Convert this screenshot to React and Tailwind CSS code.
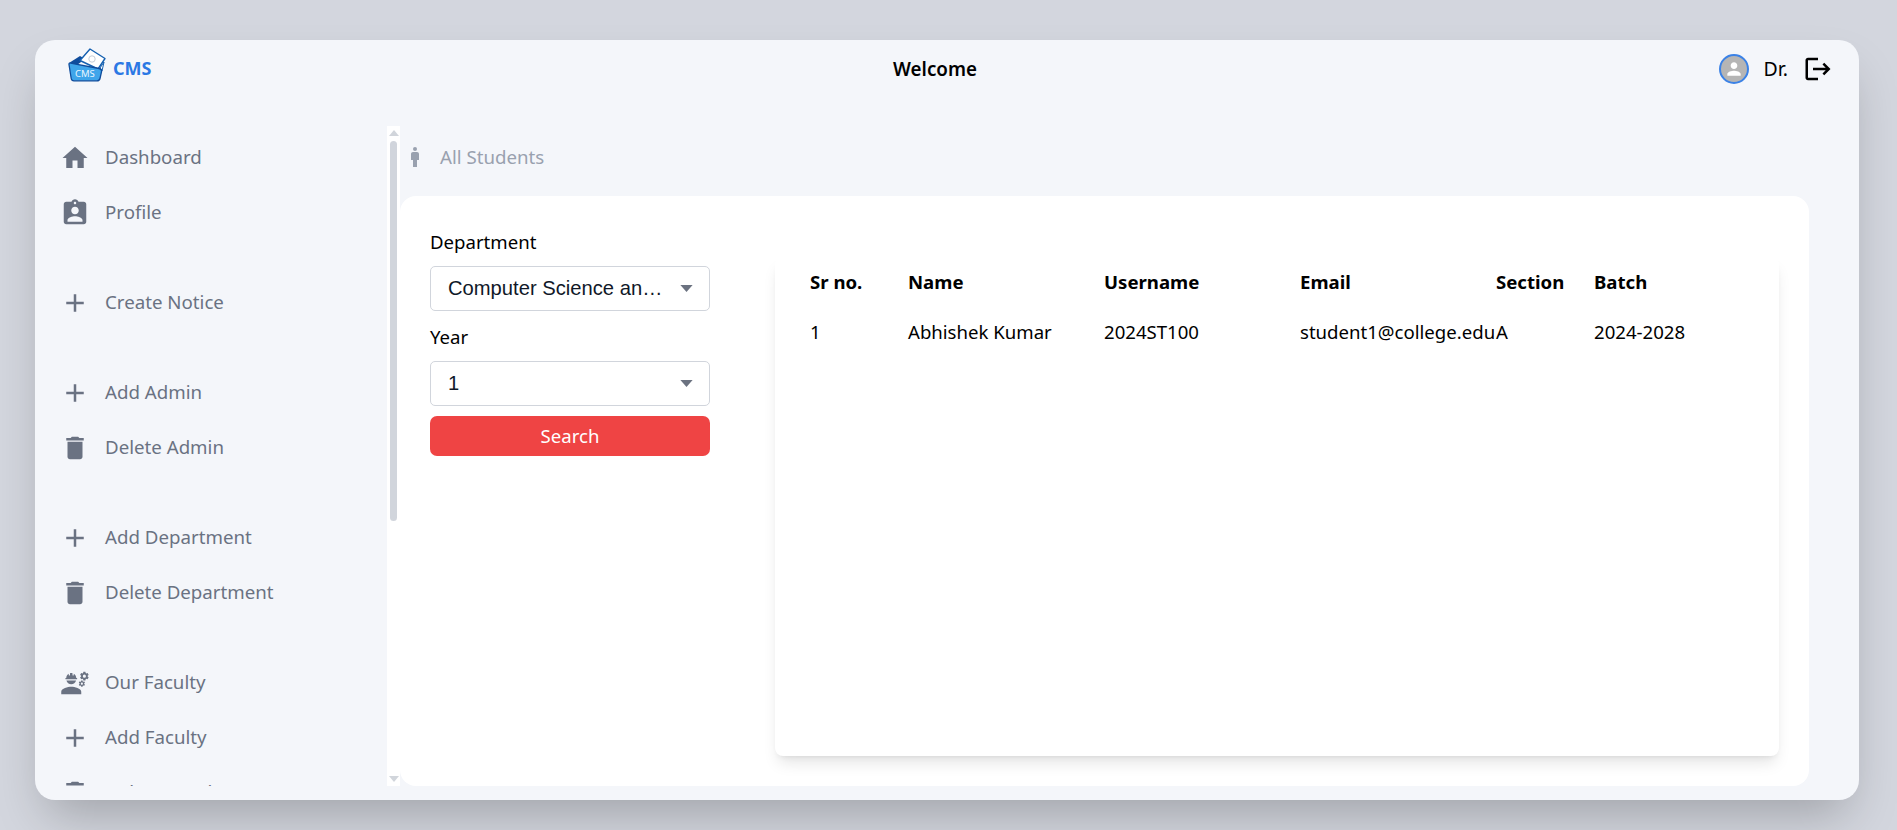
import React from 'react';
import { MdHome, MdAssignmentInd, MdAdd, MdDelete, MdEngineering, MdMan, MdLogout, MdPerson } from 'react-icons/md';

const groups = [
  [
    { icon: MdHome, label: 'Dashboard' },
    { icon: MdAssignmentInd, label: 'Profile' },
  ],
  [{ icon: MdAdd, label: 'Create Notice' }],
  [
    { icon: MdAdd, label: 'Add Admin' },
    { icon: MdDelete, label: 'Delete Admin' },
  ],
  [
    { icon: MdAdd, label: 'Add Department' },
    { icon: MdDelete, label: 'Delete Department' },
  ],
  [
    { icon: MdEngineering, label: 'Our Faculty' },
    { icon: MdAdd, label: 'Add Faculty' },
    { icon: MdDelete, label: 'Delete Faculty' },
  ],
];

function Logo() {
  return (
    <svg viewBox="0 0 38 36" className="h-[36px] w-[38px]">
      <path d="M1 16 L12 9 L17 12 L9 18 Z" fill="#0f4c9c" />
      <path d="M12 13.5 L22 2 L37 11.5 L30 22 Z" fill="#fff" stroke="#1560b0" strokeWidth="1.4" strokeLinejoin="round" />
      <circle cx="24" cy="12" r="3.2" fill="none" stroke="#c5ced8" strokeWidth="1" />
      <path d="M32 21 L36 15 L34 24 Z" fill="#fff" stroke="#1560b0" strokeWidth="1" />
      <path d="M1 17.5 Q0.8 15.8 2.6 16.2 L31 21.5 Q34 22 33.6 24.5 L32 31.5 Q31.5 33.8 29 33.8 L6 33.8 Q3.6 33.8 3.2 31.5 Z" fill="#3fa5ea" stroke="#0f4c9c" strokeWidth="1.3" />
      <text x="7" y="29.5" fontSize="9.5" fill="#e8f6ff" fontFamily="Noto Sans, sans-serif">CMS</text>
    </svg>
  );
}

function Caret() {
  return (
    <svg viewBox="0 0 14 8" className="pointer-events-none absolute right-[17px] top-[19px] h-[7px] w-[13px]">
      <path d="M0 0 H14 L7 8 Z" fill="#6b7280" />
    </svg>
  );
}

function Field({ label, value, labelClass }) {
  return (
    <div className="flex flex-col">
      <label className={`mb-[11px] text-[18.6px] leading-[26px] text-black ${labelClass}`}>{label}</label>
      <div className="relative">
        <select
          defaultValue={value}
          className="h-[45px] w-full appearance-none truncate rounded-[5px] border border-gray-300 bg-white pl-[17px] pr-[40px] font-['Liberation_Sans',sans-serif] text-[20.2px] text-gray-900 outline-none"
        >
          <option>{value}</option>
        </select>
        <Caret />
      </div>
    </div>
  );
}

const columns = 'grid grid-cols-[98px_196px_196px_196px_98px_196px] whitespace-nowrap text-[18.6px] leading-[26px] text-black';

export default function App() {
  return (
    <div className="h-screen overflow-hidden bg-[#d3d6de] pl-[35px] pt-10 font-['Noto_Sans',sans-serif]">
      <div className="flex h-[760px] w-[1824px] flex-col rounded-[20px] bg-[#f4f6fa] shadow-2xl">
        <header className="flex h-[58px] shrink-0 items-center justify-between pl-[33px] pr-[26px]">
          <div className="flex items-center gap-[7px]">
            <div className="-mt-[8px]">
              <Logo />
            </div>
            <span className="-mt-[2px] text-[18px] font-bold text-[#2b78e4]">CMS</span>
          </div>
          <h1 className="text-[18.8px] font-semibold text-black">Welcome</h1>
          <div className="flex items-center">
            <div className="flex h-[30px] w-[30px] items-center justify-center rounded-full border-2 border-[#3b82e6] bg-[#b5b5b5]">
              <MdPerson className="text-white" size={20} />
            </div>
            <span className="ml-[15px] mr-[15px] text-[19.5px] text-black">Dr.</span>
            <MdLogout className="text-black" size={30} />
          </div>
        </header>

        <div className="mt-[28px] flex min-h-0 flex-1 pb-[14px]">
          <aside className="flex h-[660px] w-[352px] shrink-0 flex-col gap-[35px] overflow-hidden pt-[4px]">
            {groups.map((group, i) => (
              <ul key={i} className="flex flex-col">
                {group.map((item) => (
                  <li key={item.label} className="flex h-[55px] shrink-0 items-center text-gray-500">
                    <span className="ml-[25px] flex w-[30px] justify-center">
                      <item.icon size={30} />
                    </span>
                    <span className="ml-[15px] text-[18.7px]">{item.label}</span>
                  </li>
                ))}
              </ul>
            ))}
          </aside>

          <div className="flex h-[660px] w-[13px] shrink-0 flex-col items-center justify-between bg-white py-[4px]">
            <div className="flex w-full flex-1 flex-col items-center">
              <svg viewBox="0 0 10 6" className="h-[6px] w-[10px]">
                <path d="M5 0 L10 6 H0 Z" fill="#d1d5db" />
              </svg>
              <div className="mt-[5px] h-[380px] w-[7px] rounded-full bg-gray-300" />
            </div>
            <svg viewBox="0 0 10 6" className="h-[6px] w-[10px]">
              <path d="M0 0 H10 L5 6 Z" fill="#d1d5db" />
            </svg>
          </div>

          <main className="flex w-[1409px] flex-col">
            <div className="mb-[8px] flex h-[62px] shrink-0 items-center text-gray-400">
              <MdMan size={24} className="ml-[3px]" />
              <span className="ml-[13px] text-[18.7px]">All Students</span>
            </div>
            <section className="flex flex-1 rounded-2xl bg-white pb-[30px] pl-[30px] pr-[30px]">
              <div className="w-[280px] shrink-0 pt-[33px]">
                <Field label="Department" value="Computer Science and Engineering" />
                <Field label="Year" value="1" labelClass="mt-[13px]" />
                <button className="mt-[10px] h-[40px] w-full rounded-[7px] bg-[#ef4444] text-[18.6px] text-white">Search</button>
              </div>
              <div className="ml-[65px] mt-[61px] min-w-0 flex-1 rounded-lg bg-white pl-[35px] shadow-lg">
                <div className={`${columns} mt-[12px] h-[26px] font-bold`}>
                  <span>Sr no.</span>
                  <span>Name</span>
                  <span>Username</span>
                  <span>Email</span>
                  <span>Section</span>
                  <span>Batch</span>
                </div>
                <div className={`${columns} mt-[24px]`}>
                  <span>1</span>
                  <span>Abhishek Kumar</span>
                  <span>2024ST100</span>
                  <span>student1@college.edu</span>
                  <span>A</span>
                  <span>2024-2028</span>
                </div>
              </div>
            </section>
          </main>
        </div>
      </div>
    </div>
  );
}
